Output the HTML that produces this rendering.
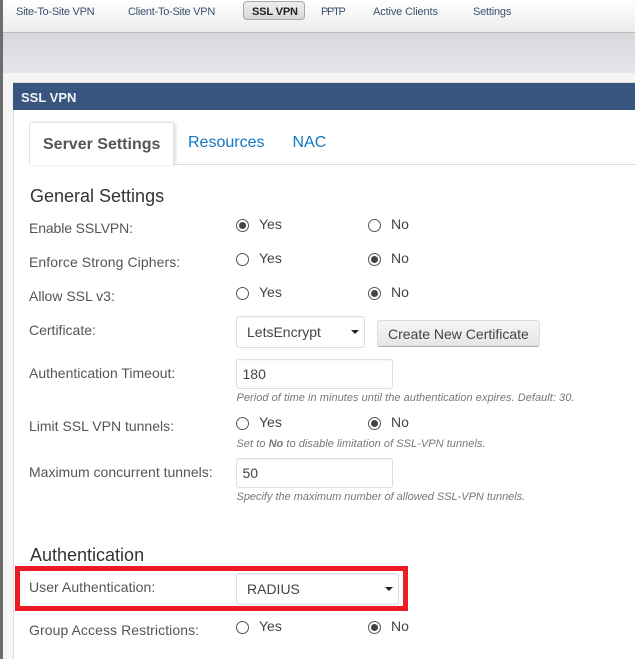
<!DOCTYPE html>
<html>
<head>
<meta charset="utf-8">
<style>
html,body{margin:0;padding:0;background:#fff}
#p{position:relative;width:635px;height:659px;overflow:hidden;background:#fff;font-family:"Liberation Sans",Arial,sans-serif;color:#555}
#p div,#p span.a{position:absolute;white-space:nowrap;box-sizing:border-box}
.nav{top:5px;font-size:11px;line-height:14px;color:#3c5270;letter-spacing:-.26px}
.lb{left:29px;font-size:14px;line-height:18px;color:#555}
.h{left:30px;font-size:18px;line-height:22px;color:#333}
.opt{font-size:14px;line-height:18px;color:#444}
.r{width:13px;height:13px;border:1px solid #555;border-radius:50%;background:#fff}
.r.on::after{content:"";position:absolute;left:2px;top:2px;width:7px;height:7px;border-radius:50%;background:#444}
.inp{background:#fff;border:1px solid #ddd;border-radius:3px;font-size:14px;color:#444;box-shadow:inset 0 1px 1px rgba(0,0,0,.03)}
.car{width:0;height:0;border-left:4px solid transparent;border-right:4px solid transparent;border-top:4px solid #222}
.help{left:236.5px;font-size:11px;line-height:13px;font-style:italic;color:#777;letter-spacing:.04px}
</style>
</head>
<body>
<div id="p">
  <div style="left:0;top:0;width:635px;height:32px;background:linear-gradient(#fff,#ececec)"></div>
  <div style="left:0;top:32px;width:635px;height:1px;background:#b9b9b9"></div>
  <div style="left:0;top:33px;width:635px;height:40px;background:linear-gradient(#d8d8dc,#e6e6ea)"></div>
  <div style="left:0;top:73px;width:635px;height:586px;background:#f5f5f5"></div>
  <div style="left:0;top:0;width:3px;height:659px;background:#6d6d6d"></div>

  <div class="nav" style="left:16px">Site-To-Site VPN</div>
  <div class="nav" style="left:128px">Client-To-Site VPN</div>
  <div style="left:243px;top:1px;width:62px;height:19px;background:linear-gradient(#eee,#d8d8d8);border:1px solid #aaa;border-radius:4px"></div>
  <div class="nav" style="left:252px;font-weight:bold;color:#222;letter-spacing:-.15px">SSL VPN</div>
  <div class="nav" style="left:321px;letter-spacing:-1.3px">PPTP</div>
  <div class="nav" style="left:373px;letter-spacing:-.13px">Active Clients</div>
  <div class="nav" style="left:473px;letter-spacing:-.2px">Settings</div>

  <div style="left:13px;top:82px;width:622px;height:577px;background:#fff;border-left:1px solid #ddd;border-top:1px solid #ddd"></div>
  <div style="left:13px;top:83px;width:622px;height:27px;background:#385580"></div>
  <div style="left:21px;top:90px;font-size:13px;line-height:15px;font-weight:bold;color:#f2f4f8">SSL VPN</div>

  <div style="left:29px;top:164px;width:606px;height:1px;background:#ddd"></div>
  <div style="left:29px;top:122px;width:145px;height:43px;background:#fff;border:1px solid #e2e2e2;border-bottom:none;border-radius:3px 3px 0 0;box-shadow:2px 0 3px rgba(0,0,0,.12)"></div>
  <div style="left:43px;top:135px;font-size:16px;line-height:19px;font-weight:bold;color:#555">Server Settings</div>
  <div style="left:188px;top:133px;font-size:16px;line-height:19px;color:#0f77c4">Resources</div>
  <div style="left:292.5px;top:133px;font-size:16px;line-height:19px;color:#0f77c4">NAC</div>

  <div class="h" style="top:185px">General Settings</div>

  <div class="lb" style="top:219px;letter-spacing:-.12px">Enable SSLVPN:</div>
  <div class="r on" style="left:236px;top:219px"></div><div class="opt" style="left:259px;top:215px">Yes</div>
  <div class="r" style="left:368px;top:219px"></div><div class="opt" style="left:391px;top:215px">No</div>

  <div class="lb" style="top:253px;letter-spacing:.08px">Enforce Strong Ciphers:</div>
  <div class="r" style="left:236px;top:253px"></div><div class="opt" style="left:259px;top:249px">Yes</div>
  <div class="r on" style="left:368px;top:253px"></div><div class="opt" style="left:391px;top:249px">No</div>

  <div class="lb" style="top:287px">Allow SSL v3:</div>
  <div class="r" style="left:236px;top:287px"></div><div class="opt" style="left:259px;top:283px">Yes</div>
  <div class="r on" style="left:368px;top:287px"></div><div class="opt" style="left:391px;top:283px">No</div>

  <div class="lb" style="top:321px">Certificate:</div>
  <div class="inp" style="left:236px;top:316px;width:129px;height:32px"></div>
  <div class="opt" style="left:247px;top:323px">LetsEncrypt</div>
  <div class="car" style="left:351px;top:330px"></div>
  <div style="left:377px;top:320px;width:163px;height:27px;background:linear-gradient(#f5f5f5,#e6e6e6);border:1px solid #ddd;border-bottom:1px solid #aaa;border-radius:3px"></div>
  <div class="opt" style="left:388px;top:325px;color:#444">Create New Certificate</div>

  <div class="lb" style="top:364px">Authentication Timeout:</div>
  <div class="inp" style="left:236px;top:359px;width:157px;height:30px"></div>
  <div class="opt" style="left:242.5px;top:365px">180</div>
  <div class="help" style="top:392px">Period of time in minutes until the authentication expires. Default: 30.</div>

  <div class="lb" style="top:417px">Limit SSL VPN tunnels:</div>
  <div class="r" style="left:236px;top:417px"></div><div class="opt" style="left:259px;top:413px">Yes</div>
  <div class="r on" style="left:368px;top:417px"></div><div class="opt" style="left:391px;top:413px">No</div>
  <div class="help" style="top:438px">Set to <b>No</b> to disable limitation of SSL-VPN tunnels.</div>

  <div class="lb" style="top:463px">Maximum concurrent tunnels:</div>
  <div class="inp" style="left:236px;top:458px;width:157px;height:30px"></div>
  <div class="opt" style="left:242.5px;top:464px">50</div>
  <div class="help" style="top:491px;letter-spacing:-.02px">Specify the maximum number of allowed SSL-VPN tunnels.</div>

  <div class="h" style="top:544px">Authentication</div>

  <div class="lb" style="top:578px;letter-spacing:.05px">User Authentication:</div>
  <div class="inp" style="left:236px;top:573px;width:163px;height:32px"></div>
  <div class="opt" style="left:247px;top:580px">RADIUS</div>
  <div class="car" style="left:385px;top:587px"></div>
  <div style="left:15px;top:566px;width:393px;height:45px;border:5px solid #ed1c24"></div>

  <div class="lb" style="top:621px;letter-spacing:.08px">Group Access Restrictions:</div>
  <div class="r" style="left:236px;top:621px"></div><div class="opt" style="left:259px;top:617px">Yes</div>
  <div class="r on" style="left:368px;top:621px"></div><div class="opt" style="left:391px;top:617px">No</div>
</div>
</body>
</html>
